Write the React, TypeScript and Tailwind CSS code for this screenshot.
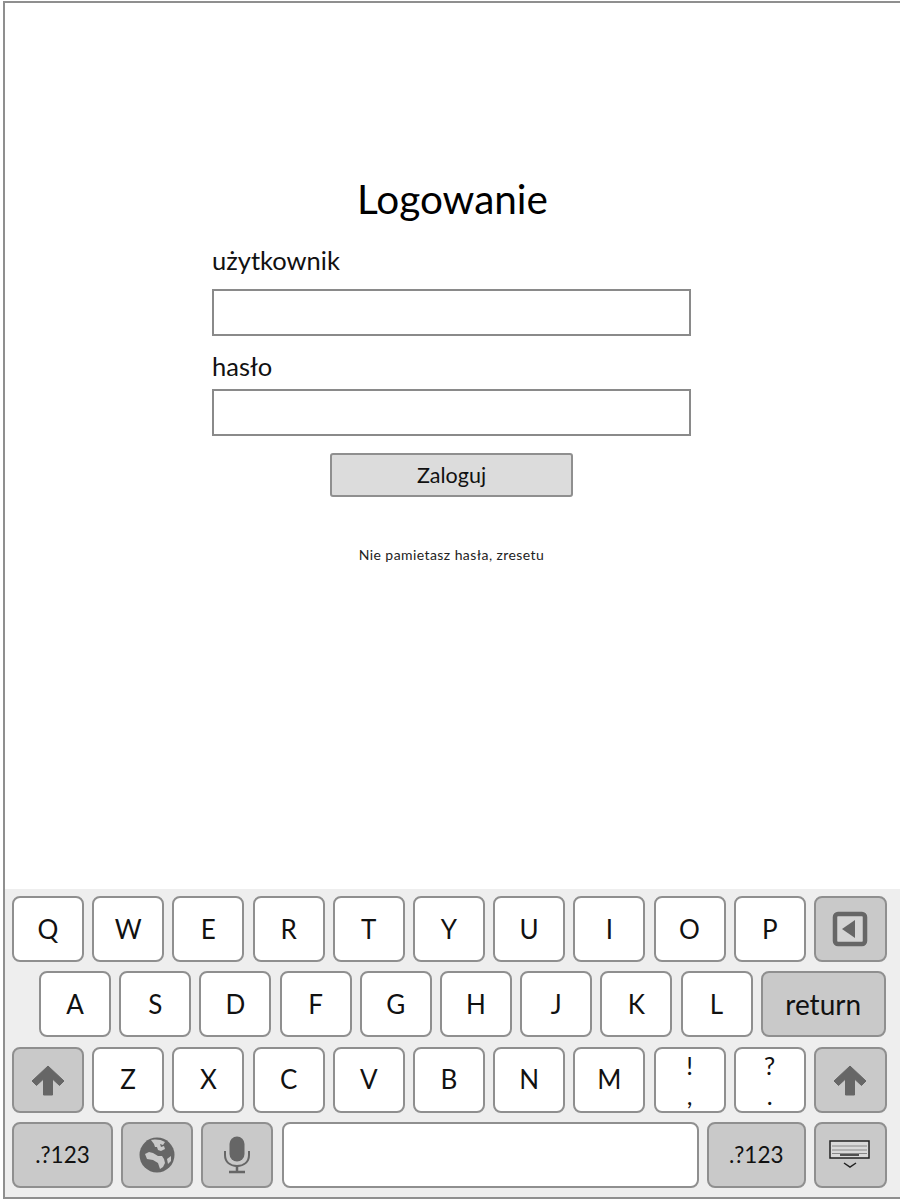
const font = "font-['Lato','Liberation_Sans',sans-serif]";

const UpArrow = () => (
  <svg width="36" height="36" viewBox="0 0 36 36">
    <path d="M18 4 L34 19 L29.5 23.5 L22.5 17 L22.5 33 L13.5 33 L13.5 17 L6.5 23.5 L2 19 Z" fill="#666" stroke="#666" strokeWidth="1" strokeLinejoin="round" />
  </svg>
);

const Backspace = () => (
  <svg width="36" height="36" viewBox="0 0 36 36">
    <rect x="3" y="3" width="30" height="30" rx="3" fill="#d4d4d4" stroke="#666" strokeWidth="4.5" />
    <path d="M10 18 L23 9 L23 27 Z" fill="#666" />
  </svg>
);

const Globe = () => (
  <svg width="36" height="36" viewBox="0 0 36 36">
    <circle cx="18" cy="18" r="17.5" fill="#666" />
    <path d="M12 3 C15 2 22 2 26 5 L24 8 L21 7 L22 10 L25 9 L26 12 L22 14 L19 13 L18 10 L16 10 L15 7 Z" fill="#c9c9c9" />
    <path d="M6 17 L10 15 L14 16 L19 19 L23 19 L25 22 L26 26 L24 30 L21 32 L19 26 L14 23 L8 22 Z" fill="#c9c9c9" />
    <path d="M28 22 L32 19 L32 24 L29 27 Z" fill="#c9c9c9" />
  </svg>
);

const Mic = () => (
  <svg width="30" height="38" viewBox="0 0 30 38">
    <rect x="7.5" y="0.5" width="15" height="25" rx="7.5" fill="#666" />
    <path d="M3 15 V19 C3 26 8 30 15 30 C22 30 27 26 27 19 V15" fill="none" stroke="#666" strokeWidth="2" />
    <path d="M15 30 V36 M7 36 H23" fill="none" stroke="#666" strokeWidth="2.5" />
  </svg>
);

const KeyboardHide = () => (
  <svg width="42" height="30" viewBox="0 0 42 30">
    <rect x="1" y="1" width="39" height="17" fill="#d9d9d9" stroke="#222" strokeWidth="1.5" />
    <path d="M3 6 H38 M3 10 H38 M3 13.5 H38" stroke="#888" strokeWidth="1" />
    <path d="M11 15 H30" stroke="#222" strokeWidth="1.5" />
    <path d="M15 23 L21 27 L27 23" fill="none" stroke="#222" strokeWidth="1.5" />
  </svg>
);

const Key = ({ label, dark, className = "w-[72px]", children }: { label?: string; dark?: boolean; className?: string; children?: React.ReactNode }) => (
  <div
    className={`h-[66px] shrink-0 rounded-[8px] border-2 border-[#8f8f8f] flex items-center justify-center text-[#111] ${
      dark ? "bg-[#c9c9c9]" : "bg-white"
    } ${className}`}
  >
    {label}
    {children}
  </div>
);

const TOP = ["Q", "W", "E", "R", "T", "Y", "U", "I", "O", "P"];
const MID = ["A", "S", "D", "F", "G", "H", "J", "K", "L"];
const BOTTOM = ["Z", "X", "C", "V", "B", "N", "M"];

const Keyboard = () => (
  <div className="bg-[#eeeeee] h-[308px] pt-[7px] pl-[7px] flex flex-col gap-[9.4px] text-[26px]">
    <div className="flex gap-[8.2px]">
      {TOP.map((k) => (
        <Key key={k} label={k} />
      ))}
      <Key dark className="w-[73px]">
        <Backspace />
      </Key>
    </div>
    <div className="flex gap-[8.2px] pl-[27px]">
      {MID.map((k) => (
        <Key key={k} label={k} />
      ))}
      <Key dark className="w-[125px] text-[28px]">
        return
      </Key>
    </div>
    <div className="flex gap-[8.2px]">
      <Key dark>
        <UpArrow />
      </Key>
      {BOTTOM.map((k) => (
        <Key key={k} label={k} />
      ))}
      <Key>
        <div className="flex flex-col items-center leading-[30px] text-[25px]">
          <span>!</span>
          <span>,</span>
        </div>
      </Key>
      <Key>
        <div className="flex flex-col items-center leading-[30px] text-[25px]">
          <span>?</span>
          <span>.</span>
        </div>
      </Key>
      <Key dark className="w-[73px]">
        <UpArrow />
      </Key>
    </div>
    <div className="flex gap-[8.2px] text-[22.5px]">
      <Key dark label=".?123" className="w-[101px]" />
      <Key dark>
        <Globe />
      </Key>
      <Key dark>
        <Mic />
      </Key>
      <Key className="w-[417px]" />
      <Key dark label=".?123" className="w-[99px]" />
      <Key dark className="w-[73px]">
        <KeyboardHide />
      </Key>
    </div>
  </div>
);

export default function App() {
  return (
    <div className={`w-[900px] h-[1200px] bg-white pl-[3px] pt-px pb-px ${font}`}>
      <div className="h-full border-l-2 border-t-2 border-b-2 border-[#8f8f8f] flex flex-col">
        <div className="flex-1 pt-[171px]">
          <h1 className="text-center text-[40.5px] leading-[50px] text-black">Logowanie</h1>
          <div className="w-[479px] ml-[207px]">
            <div className="mt-[19px] text-[25.5px] leading-[34px] text-[#111]">użytkownik</div>
            <div className="mt-[12px] h-[47px] border-2 border-[#8a8a8a] bg-white" />
            <div className="mt-[13px] text-[25.5px] leading-[34px] text-[#111]">hasło</div>
            <div className="mt-[6px] h-[47px] border-2 border-[#8a8a8a] bg-white" />
            <div className="mt-[17px] mx-auto w-[243px] h-[44px] bg-[#dcdcdc] border-2 border-[#8f8f8f] rounded-[3px] flex items-center justify-center text-[21.5px] text-[#111]">
              Zaloguj
            </div>
            <div className="mt-[50px] text-center text-[14px] tracking-[0.43px] leading-[16px] text-[#222]">Nie pamietasz hasła, zresetu</div>
          </div>
        </div>
        <Keyboard />
      </div>
    </div>
  );
}
